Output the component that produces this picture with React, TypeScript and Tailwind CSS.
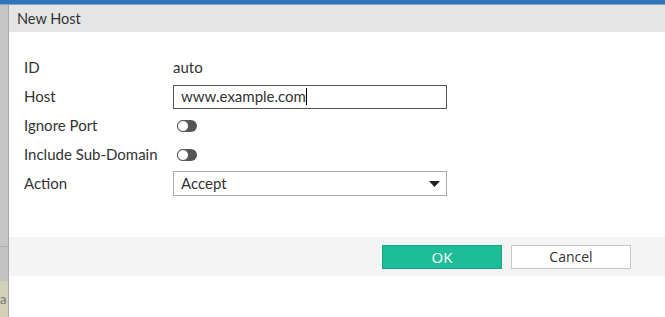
import React from "react";

function Toggle() {
  return (
    <div className="relative w-[20px] h-[12px] rounded-full bg-[#555555]">
      <div className="absolute left-0 top-0 w-[12px] h-[12px] rounded-full bg-white border border-[#555555]" />
    </div>
  );
}

export default function App() {
  const font = { fontFamily: "Lato, 'Open Sans', sans-serif" };
  return (
    <div className="w-[665px] h-[317px] flex flex-col bg-white overflow-hidden" style={font}>
      <div className="h-[5px] bg-[#2f76b8] border-b border-[#7fa7cc] shrink-0" />
      <div className="flex flex-1">
        <div className="w-[9px] flex flex-col shrink-0 border-r border-[#a8a8a8]">
          <div className="h-[241px] bg-[#c6c6c6]" />
          <div className="h-[35px] bg-[#c2c2c2] border-t border-[#b0b0b0]" />
          <div className="flex-1 bg-[#d2d0b6] text-[13px] text-[#777] leading-none pt-[12px] overflow-hidden">a</div>
        </div>
        <div className="flex-1 flex flex-col">
          <div className="h-[27px] bg-[#e5e5e5] flex items-center pl-[8px] text-[14.5px] text-[#333]">New Host</div>
          <div className="h-[205px] pl-[15px] pt-[21px] text-[15px] text-[#333]">
            <div className="flex items-center h-[29px]">
              <div className="w-[149px]">ID</div>
              <div>auto</div>
            </div>
            <div className="flex items-center h-[29px]">
              <div className="w-[149px]">Host</div>
              <div className="w-[274px] h-[24px] border border-[#555] flex items-center pl-[7px]">
                www.example.com<span className="inline-block w-[1px] h-[17px] bg-black" />
              </div>
            </div>
            <div className="flex items-center h-[29px]">
              <div className="w-[153px]">Ignore Port</div>
              <Toggle />
            </div>
            <div className="flex items-center h-[29px]">
              <div className="w-[153px]">Include Sub-Domain</div>
              <Toggle />
            </div>
            <div className="flex items-center h-[29px]">
              <div className="w-[149px]">Action</div>
              <div className="w-[274px] h-[25px] border border-[#aaa] flex items-center justify-between pl-[7px] pr-[6px]">
                <span>Accept</span>
                <svg width="11" height="6" viewBox="0 0 11 6"><path d="M0 0H11L5.5 6Z" fill="#222" /></svg>
              </div>
            </div>
          </div>
          <div className="h-[39px] bg-[#f4f4f4] flex items-center justify-end gap-[9px] pr-[34px]">
            <button className="w-[120px] h-[24px] bg-[#1fbc98] border border-[#17a585] text-white text-[15px]" style={{ fontFamily: "'Open Sans', sans-serif" }}>OK</button>
            <button className="w-[120px] h-[24px] bg-white border border-[#c8c8c8] text-[#333] text-[14px]" style={{ fontFamily: "'Open Sans', sans-serif" }}>Cancel</button>
          </div>
          <div className="flex-1 bg-white" />
        </div>
      </div>
    </div>
  );
}
